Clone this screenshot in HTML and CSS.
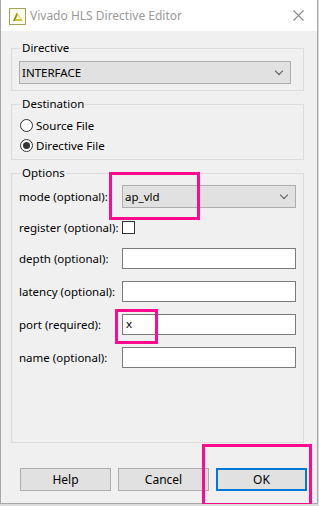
FILE: index.html
```html
<!DOCTYPE html>
<html lang="en">
<head>
    <meta charset="UTF-8">
    <meta name="viewport" content="width=device-width, initial-scale=1.0">
    <title>Vivado HLS Directive Editor</title>
    <link rel="stylesheet" href="styles.css">
</head>
<body>
    <div class="window">
        <div class="titlebar">
            <svg class="app-icon" width="17" height="17" viewBox="0 0 17 17">
                <rect x="0.5" y="0.5" width="16" height="16" fill="#fbfbf2" stroke="#a4a255"/>
                <path d="M4 13 L7.5 5 L9 6 L6 13 Z" fill="#8c8a1e"/>
                <path d="M8 4 L11 9 L13.5 13 L9.5 12 L11 10.5 L8.5 8 Z" fill="#e6d84a"/>
                <path d="M7 11 L12 11 L13.5 13 L6 13 Z" fill="#cfc33a"/>
            </svg>
            <span class="title">Vivado HLS Directive Editor</span>
            <svg class="close" width="11" height="11" viewBox="0 0 11 11">
                <path d="M0.5 0.5 L10.5 10.5 M10.5 0.5 L0.5 10.5" stroke="#8a8a8a" stroke-width="1.1"/>
            </svg>
        </div>

        <div class="content">
            <fieldset class="group">
                <legend>Directive</legend>
                <div class="combo wide">
                    <span>INTERFACE</span>
                    <span class="chevron"></span>
                </div>
            </fieldset>

            <fieldset class="group dest">
                <legend>Destination</legend>
                <label class="radio-row"><span class="radio"></span>Source File</label>
                <label class="radio-row"><span class="radio checked"></span>Directive File</label>
            </fieldset>

            <fieldset class="group options">
                <legend>Options</legend>
                <div class="row row-mode">
                    <span class="label">mode (optional):</span>
                    <div class="combo field">
                        <span>ap_vld</span>
                        <span class="chevron"></span>
                        <span class="mark mark-mode"></span>
                    </div>
                </div>
                <div class="row row-check">
                    <span class="label">register (optional):</span>
                    <span class="checkbox"></span>
                </div>
                <div class="row">
                    <span class="label">depth (optional):</span>
                    <div class="textbox field"></div>
                </div>
                <div class="row">
                    <span class="label">latency (optional):</span>
                    <div class="textbox field"></div>
                </div>
                <div class="row">
                    <span class="label">port (required):</span>
                    <div class="textbox field">
                        x
                        <span class="mark mark-port"></span>
                    </div>
                </div>
                <div class="row">
                    <span class="label">name (optional):</span>
                    <div class="textbox field"></div>
                </div>
            </fieldset>
        </div>

        <div class="buttons">
            <button type="button">Help</button>
            <button type="button">Cancel</button>
            <button type="button" class="default">OK<span class="mark mark-ok"></span></button>
        </div>
    </div>
</body>
</html>
```

FILE: styles.css
```css
* {
    margin: 0;
    padding: 0;
    box-sizing: border-box;
}

body {
    font-family: "Noto Sans", "Open Sans", sans-serif;
    font-size: 11.5px;
    color: #000;
    background-color: #dcdcdc;
    overflow: hidden;
}

.window {
    width: 318px;
    height: 504px;
    background-color: #f0f0f0;
    border: 1px solid #a8a8a8;
    border-top: none;
    display: flex;
    flex-direction: column;
}

.titlebar {
    height: 31px;
    background-color: #fff;
    display: flex;
    align-items: center;
    padding: 0 9px 0 8px;
}

.app-icon {
    margin-right: 4px;
    margin-top: 1px;
}

.title {
    color: #9a9a9a;
    font-size: 12px;
    flex: 1;
}

.close {
    margin-right: 4px;
}

.content {
    flex: 1;
    display: flex;
    flex-direction: column;
    padding: 9px 13px 0 10px;
}

.group {
    border: 1px solid #dcdcdc;
    padding: 5px 12px 6px 7px;
    margin-bottom: 5px;
}

.group legend {
    margin-left: 2px;
    padding: 0 1px;
    line-height: 16px;
}

.combo {
    height: 23px;
    background-color: #e1e1e1;
    border: 1px solid #adadad;
    display: flex;
    align-items: center;
    padding-left: 2px;
    position: relative;
}

.combo span:first-child {
    flex: 1;
}

.chevron {
    width: 6px;
    height: 6px;
    border-right: 1px solid #555;
    border-bottom: 1px solid #555;
    transform: rotate(45deg);
    margin: 0 8px 4px 0;
}

.dest {
    padding: 3px 7px 4px 7px;
}

.radio-row {
    display: flex;
    align-items: center;
    height: 20px;
}

.radio {
    width: 13px;
    height: 13px;
    border: 1px solid #333;
    border-radius: 50%;
    background-color: #fff;
    margin: 0 3px 0 1px;
    display: flex;
    align-items: center;
    justify-content: center;
}

.radio.checked::after {
    content: '';
    width: 7px;
    height: 7px;
    border-radius: 50%;
    background-color: #333;
}

.options {
    flex: 1;
    margin-bottom: 0;
    padding: 4px 7px 0 7px;
}

.row {
    display: flex;
    align-items: center;
    height: 22px;
    margin-bottom: 11px;
}

.row-mode {
    height: 23px;
    margin-bottom: 9px;
}

.row-check {
    height: 20px;
    margin-bottom: 10px;
}

.label {
    width: 103px;
    white-space: nowrap;
}

.field {
    flex: 1;
    position: relative;
}

.textbox {
    height: 21px;
    background-color: #fff;
    border: 1px solid #7a7a7a;
    padding-left: 3px;
    line-height: 18px;
}

.checkbox {
    width: 13px;
    height: 13px;
    border: 1px solid #333;
    background-color: #fff;
}

.buttons {
    display: flex;
    justify-content: flex-end;
    gap: 7px;
    padding: 25px 10px 12px 0;
}

button {
    width: 91px;
    height: 23px;
    font-family: inherit;
    font-size: 12px;
    color: #000;
    background-color: #e1e1e1;
    border: 1px solid #adadad;
    position: relative;
}

button.default {
    border: 2px solid #0078d7;
}

.mark {
    position: absolute;
    border: 3px solid #ff0a8c;
}

.mark-mode {
    left: -14px;
    top: -14px;
    width: 91px;
    height: 48px;
}

.mark-port {
    left: -8px;
    top: -6px;
    width: 43px;
    height: 35px;
}

.mark-ok {
    left: -16px;
    top: -26px;
    width: 110px;
    height: 62px;
}
```
